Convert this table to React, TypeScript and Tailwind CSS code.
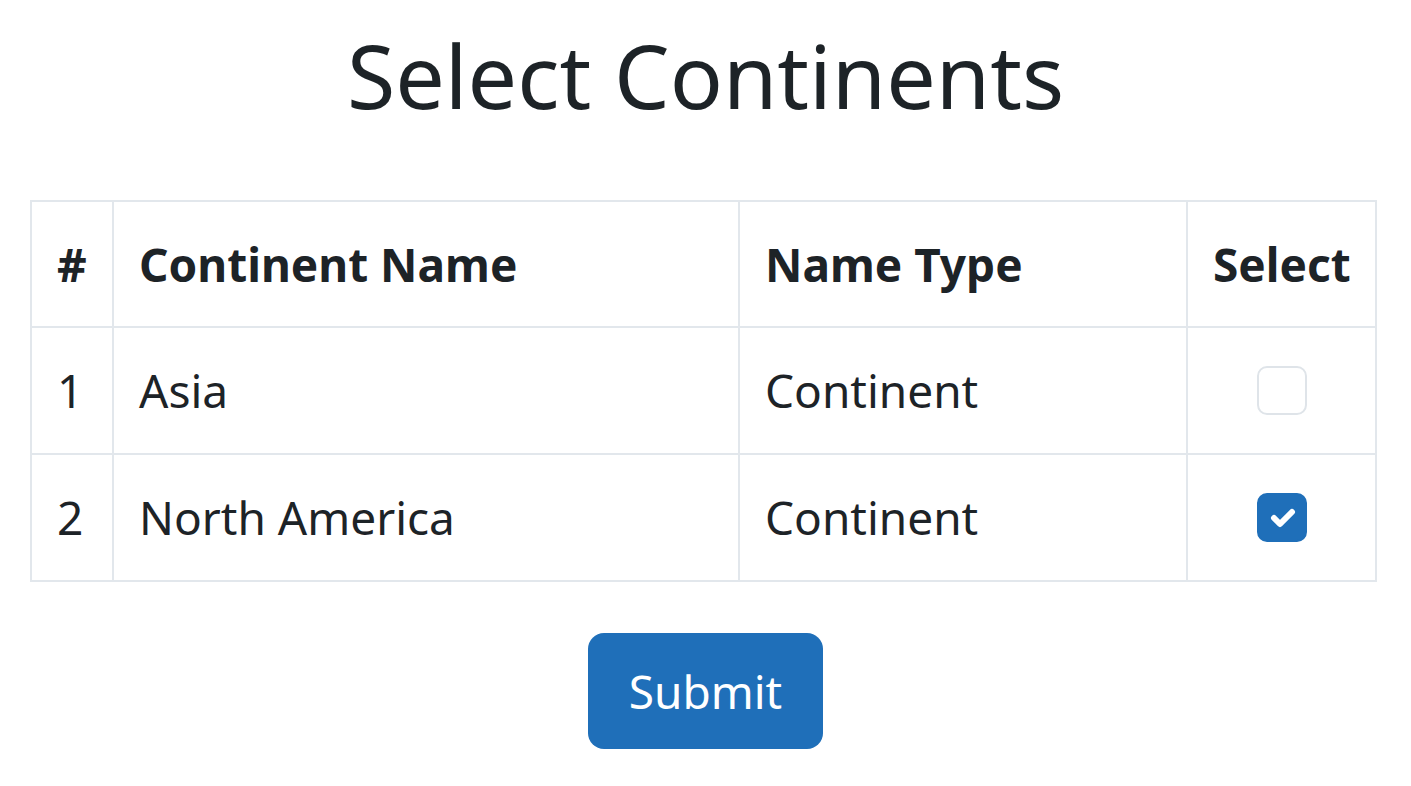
import React, { useState } from 'react';

const rows = [
  { id: 1, name: 'Asia', type: 'Continent', checked: false },
  { id: 2, name: 'North America', type: 'Continent', checked: true },
];

export default function App() {
  const [selected, setSelected] = useState<Record<number, boolean>>(
    Object.fromEntries(rows.map(r => [r.id, r.checked]))
  );

  return (
    <div className="min-h-screen bg-white text-[#1d2327] font-['Noto_Sans','Open_Sans',sans-serif]">
      <h1 className="text-center text-[88px] leading-none pt-[31px] h-[200px]">Select Continents</h1>

      <div className="pl-[30px] pr-[34px]">
        <table className="w-full table-fixed border-collapse border-2 border-[#e2e7ec]">
          <colgroup>
            <col className="w-[82px]" />
            <col className="w-[626px]" />
            <col className="w-[448px]" />
            <col />
          </colgroup>
          <thead>
            <tr className="h-[126px]">
              <th className="border-2 border-[#e2e7ec] px-[25px] text-left text-[46px] font-bold">#</th>
              <th className="border-2 border-[#e2e7ec] px-[25px] text-left text-[46px] font-bold">Continent Name</th>
              <th className="border-2 border-[#e2e7ec] px-[25px] text-left text-[46px] font-bold">Name Type</th>
              <th className="border-2 border-[#e2e7ec] px-[25px] text-center text-[46px] font-bold">Select</th>
            </tr>
          </thead>
          <tbody>
            {rows.map(r => (
              <tr key={r.id} className="h-[127px]">
                <td className="border-2 border-[#e2e7ec] px-[25px] text-[46px]">{r.id}</td>
                <td className="border-2 border-[#e2e7ec] px-[25px] text-[46px]">{r.name}</td>
                <td className="border-2 border-[#e2e7ec] px-[25px] text-[46px]">{r.type}</td>
                <td className="border-2 border-[#e2e7ec] px-[25px] text-center">
                  <button
                    onClick={() => setSelected(s => ({ ...s, [r.id]: !s[r.id] }))}
                    className={`inline-flex items-center justify-center w-[50px] h-[49px] rounded-[10px] align-middle ${
                      selected[r.id] ? 'bg-[#1f6fb9] border-2 border-[#1f6fb9]' : 'bg-white border-2 border-[#dfe4e9]'
                    }`}
                  >
                    {selected[r.id] && (
                      <svg viewBox="0 0 20 20" className="w-[40px] h-[40px]">
                        <path d="M6 10l3 3l6-6" fill="none" stroke="#fff" strokeWidth="3" strokeLinecap="round" strokeLinejoin="round" />
                      </svg>
                    )}
                  </button>
                </td>
              </tr>
            ))}
          </tbody>
        </table>
      </div>

      <div className="flex justify-center mt-[51px]">
        <button className="w-[235px] h-[116px] rounded-[16px] bg-[#1f6fb9] text-white text-[46px]">Submit</button>
      </div>
    </div>
  );
}
